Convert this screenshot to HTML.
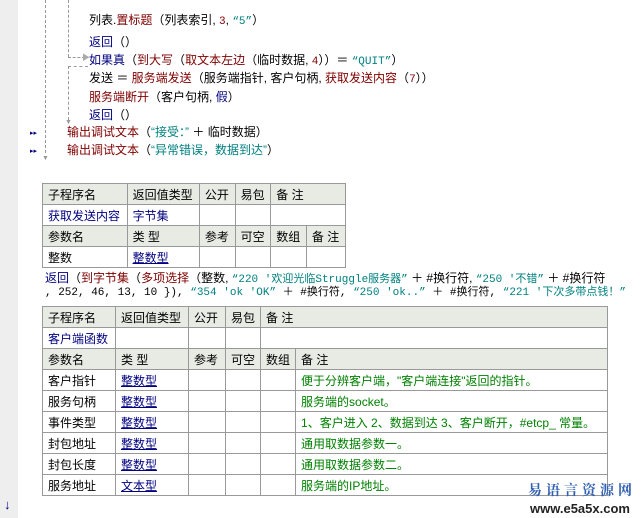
<!DOCTYPE html><html><head><meta charset="utf-8"><style>
body{margin:0;width:643px;height:518px;background:#fff;position:relative;overflow:hidden;font-family:"Liberation Sans","Noto Sans CJK SC","WenQuanYi Zen Hei",sans-serif;font-size:12px;color:#000}
.g{position:absolute;left:0;top:0;width:18px;height:518px;background:#eeeeee}
.l{position:absolute;white-space:pre;line-height:16px}
.b{color:#000080}.r{color:#800000}.t{color:#008080}.n{color:#800000}
.m{font-family:"Liberation Mono",monospace;font-size:11px}
table{position:absolute;border-collapse:collapse}
td{border:1px solid #999;padding:0 5px;height:20px;white-space:nowrap;font-size:12px}
tr.h td{background:#e8eae4}
td.k{color:#000080}
td.u{color:#000080;text-decoration:underline}
td.c{color:#008000}
.dv{position:absolute;border-left:1px dashed #999}
.dh{position:absolute;border-top:1px dashed #999}
</style></head><body>
<div class="g"></div>
<div class="dv" style="left:45px;top:0;height:153px"></div>
<div class="dv" style="left:68px;top:0;height:57px"></div>
<div class="dh" style="left:68px;top:57px;width:17px"></div>
<div class="l" style="left:82px;top:50px;color:#aaa;font-size:8px">▶</div>
<div class="dh" style="left:68px;top:66px;width:20px"></div>
<div class="dv" style="left:68px;top:66px;height:54px"></div>
<div class="l" style="left:65px;top:115px;color:#999;font-size:7px">▼</div>
<div class="l" style="left:42px;top:151px;color:#999;font-size:7px">▼</div>
<div class="l" style="left:30px;top:126px;color:#000080;font-size:7px">▸▸</div>
<div class="l" style="left:30px;top:144px;color:#000080;font-size:7px">▸▸</div>
<div class="l" style="left:4px;top:497px;color:#000080;font-size:13px">↓</div>

<div class="l" style="left:89px;top:12px">列表.<span class="r">置标题</span>（列表索引, <span class="n m">3</span>, <span class="t m">“5”</span>）</div>
<div class="l" style="left:89px;top:34px"><span class="b">返回</span>（）</div>
<div class="l" style="left:89px;top:52px"><span class="b">如果真</span>（<span class="r">到大写</span>（<span class="r">取文本左边</span>（临时数据, <span class="n m">4</span>））＝ <span class="t m">“QUIT”</span>）</div>
<div class="l" style="left:89px;top:70px">发送 ＝ <span class="r">服务端发送</span>（服务端指针, 客户句柄, <span class="r">获取发送内容</span>（<span class="n m">7</span>））</div>
<div class="l" style="left:89px;top:89px"><span class="r">服务端断开</span>（客户句柄, <span class="b">假</span>）</div>
<div class="l" style="left:89px;top:107px"><span class="b">返回</span>（）</div>
<div class="l" style="left:67px;top:124px"><span class="r">输出调试文本</span>（<span class="t">“接受：”</span> ＋ 临时数据）</div>
<div class="l" style="left:67px;top:142px"><span class="r">输出调试文本</span>（<span class="t">“异常错误，数据到达”</span>）</div>

<table style="left:42px;top:183px;width:304px">
<tr class="h"><td>子程序名</td><td>返回值类型</td><td>公开</td><td>易包</td><td colspan="2">备 注</td></tr>
<tr><td class="k">获取发送内容</td><td class="k">字节集</td><td></td><td></td><td colspan="2"></td></tr>
<tr class="h"><td>参数名</td><td>类 型</td><td>参考</td><td>可空</td><td>数组</td><td>备 注</td></tr>
<tr><td>整数</td><td class="u">整数型</td><td></td><td></td><td></td><td></td></tr>
</table>

<div class="l" style="left:45px;top:270px"><span class="b">返回</span>（<span class="r">到字节集</span>（<span class="r">多项选择</span>（整数, <span class="t m">“220 ′欢迎光临Struggle服务器”</span> ＋ #换行符, <span class="t m">“250 ′不错”</span> ＋ #换行符</div>
<div class="l m" style="left:45px;top:285px">, 252, 46, 13, 10 }), <span class="t">“354 ′ok ′OK”</span> ＋ #换行符, <span class="t">“250 ′ok..”</span> ＋ #换行符, <span class="t">“221 ′下次多带点钱！”</span></div>

<table style="left:42px;top:306px;width:566px">
<tr class="h"><td style="width:62px">子程序名</td><td style="width:62px">返回值类型</td><td style="width:26px">公开</td><td style="width:24px">易包</td><td colspan="2">备 注</td></tr>
<tr><td class="k">客户端函数</td><td></td><td></td><td></td><td colspan="2"></td></tr>
<tr class="h"><td>参数名</td><td>类 型</td><td>参考</td><td>可空</td><td style="width:24px">数组</td><td>备 注</td></tr>
<tr><td>客户指针</td><td class="u">整数型</td><td></td><td></td><td></td><td class="c">便于分辨客户端，"客户端连接"返回的指针。</td></tr>
<tr><td>服务句柄</td><td class="u">整数型</td><td></td><td></td><td></td><td class="c">服务端的socket。</td></tr>
<tr><td>事件类型</td><td class="u">整数型</td><td></td><td></td><td></td><td class="c">1、客户进入 2、数据到达 3、客户断开，#etcp_ 常量。</td></tr>
<tr><td>封包地址</td><td class="u">整数型</td><td></td><td></td><td></td><td class="c">通用取数据参数一。</td></tr>
<tr><td>封包长度</td><td class="u">整数型</td><td></td><td></td><td></td><td class="c">通用取数据参数二。</td></tr>
<tr><td>服务地址</td><td class="u">文本型</td><td></td><td></td><td></td><td class="c">服务端的IP地址。</td></tr>
</table>

<div class="l" style="left:528px;top:482px;color:#3060b0;font-size:14px;letter-spacing:4px;font-weight:bold;font-family:'Noto Serif CJK SC',serif">易语言资源网</div>
<div class="l" style="left:530px;top:501px;color:#222;font-size:13px;font-weight:bold">www.e5a5x.com</div>
</body></html>
